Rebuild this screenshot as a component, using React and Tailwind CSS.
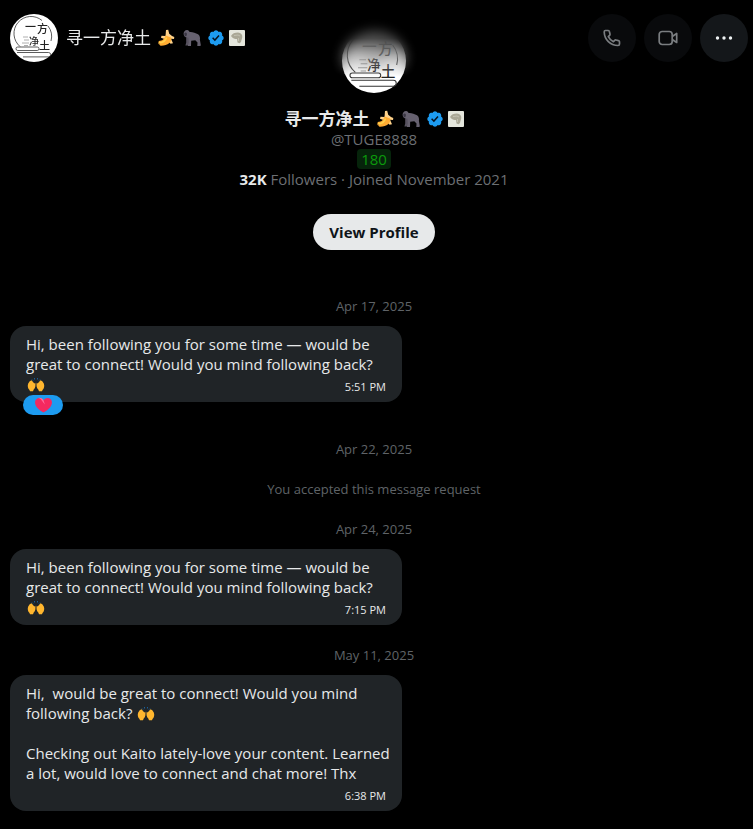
import React from 'react';

const messages = [
  { type: 'date', text: 'Apr 17, 2025' },
  {
    type: 'message',
    lines: ['Hi, been following you for some time — would be', 'great to connect! Would you mind following back?', '🙌'],
    time: '5:51 PM',
    reaction: true,
  },
  { type: 'date', text: 'Apr 22, 2025' },
  { type: 'date', text: 'You accepted this message request' },
  { type: 'date', text: 'Apr 24, 2025' },
  {
    type: 'message',
    lines: ['Hi, been following you for some time — would be', 'great to connect! Would you mind following back?', '🙌'],
    time: '7:15 PM',
  },
  { type: 'date', text: 'May 11, 2025' },
  {
    type: 'message',
    lines: [
      'Hi,  would be great to connect! Would you mind',
      'following back? 🙌',
      '',
      'Checking out Kaito lately-love your content. Learned',
      'a lot, would love to connect and chat more! Thx',
    ],
    time: '6:38 PM',
  },
];

const Avatar = ({ className }) => (
  <svg viewBox="0 0 48 48" className={className} role="img" aria-label="Avatar">
    <circle cx="24" cy="24" r="24" fill="#fff" />
    <g fill="none" stroke="#333" strokeWidth="0.8">
      <path d="M10 32.500A17 17 0 0 1 32 6.500M38 12A17 17 0 0 1 41 27" />
      <rect x="6" y="33" width="23" height="3.500" rx="1.700" />
      <path d="M7 38.500h31.500a2.200 2.200 0 0 1 0 4.400H13" />
      <path d="M13 23h5M14 26h5M12 29h7M14 31.500h4" stroke="#999" />
    </g>
    <g fill="#222" fontFamily="'Noto Sans CJK SC', sans-serif" fontWeight="500">
      <text x="15" y="17" fontSize="11">一</text>
      <text x="27" y="19" fontSize="11">方</text>
      <text x="19" y="31" fontSize="10">净</text>
      <text x="29" y="36" fontSize="11">土</text>
    </g>
  </svg>
);

const Banana = () => (
  <svg viewBox="0 0 18 18" className="size-[18px]" role="img" aria-label="banana">
    <path d="M9 1l2.200-.3 1 4L15 7l2.300 1-.3 2-3-.2 2 4.400-2.400.6L10 11 4 8.800l.5-2L8.500 7z" fill="#ffd28a" />
    <path d="M8.500 6.500l5.500 2c1.500 4.500-3.500 8.500-10.500 8.200L1.200 14.500l.6-2.500C5.500 11.800 7.500 10.300 8.500 6.500z" fill="#ffac33" />
    <path d="M9.500 8.500C8.500 12 6 13.800 1.800 13.800" stroke="#ffd24d" strokeWidth="1.500" fill="none" />
    <path d="M1.200 14.500l.4-1.700 1.500 3.800z" fill="#7a5420" />
  </svg>
);

const Gorilla = () => (
  <svg viewBox="0 0 18 18" className="size-[18px]" role="img" aria-label="gorilla">
    <path d="M.6 4.800C.5 2.600 2 .8 4.200.9c1.300.1 2 .9 2.300 2.100C9 2.600 12.500 3.800 15 5.200c1.800 1.200 2.300 3.300 1.900 5.500l.9 5.300-.4 1h-3.100l.2-3.500-2.200-2.300-4.100.6-.2 5.200H4.700l.4-2-.7-5.800L2.800 8.200C1.500 8 .7 6.400.6 4.800z" fill="#66616f" />
    <path d="M3.200 8.600l2.200.2.400 5-1.200 2.700H2.400l.8-3z" fill="#57525f" />
    <path d="M1.300 4.200C2 3.200 3.200 3.200 3.800 4.200l.1 1.800-1 1.400L1.500 6.600z" fill="#3a3643" />
  </svg>
);

const Verified = () => (
  <svg viewBox="0 0 22 22" className="size-[18px]" role="img" aria-label="Verified account">
    <path
      fill="#1d9bf0"
      d="M20.396 11c-.018-.646-.215-1.275-.57-1.816-.354-.54-.852-.972-1.438-1.246.223-.607.27-1.264.14-1.897-.131-.634-.437-1.218-.882-1.687-.47-.445-1.053-.75-1.687-.882-.633-.13-1.290-.083-1.897.14-.273-.587-.704-1.086-1.245-1.440S11.647 1.620 11 1.604c-.646.017-1.273.213-1.813.568s-.969.854-1.240 1.440c-.608-.223-1.267-.272-1.902-.140-.635.130-1.220.436-1.690.882-.445.470-.749 1.055-.878 1.688-.130.633-.080 1.290.144 1.896-.587.274-1.087.705-1.443 1.245-.356.540-.555 1.170-.574 1.817.020.647.218 1.276.574 1.817.356.540.856.972 1.443 1.245-.224.606-.274 1.263-.144 1.896.130.634.433 1.218.877 1.688.470.443 1.054.747 1.687.878.633.132 1.290.084 1.897-.136.274.586.705 1.084 1.246 1.439.540.354 1.170.551 1.816.569.647-.016 1.276-.213 1.817-.567s.972-.854 1.245-1.440c.604.239 1.266.296 1.903.164.636-.132 1.220-.447 1.680-.907.460-.460.776-1.044.908-1.681s.075-1.299-.165-1.903c.586-.274 1.084-.705 1.439-1.246.354-.540.551-1.170.569-1.816z"
    />
    <path fill="#06121f" d="M9.662 14.850l-3.429-3.428 1.293-1.302 2.072 2.072 4.400-4.794 1.347 1.246z" />
  </svg>
);

const Affiliate = () => (
  <svg viewBox="0 0 16 16" className="size-4" role="img" aria-label="Affiliate badge">
    <rect width="16" height="16" rx="1" fill="#e4e6dc" />
    <path d="M2 6c1-2.500 4-3.500 7-3.500 3 .2 4.500 2 4.300 4.500-.2 2-1 3-1.300 5l-1.500 1.200-2-.7-.5-3.500C6 9 3.500 8.500 2 6z" fill="#a9a795" />
    <path d="M5 5.500l4-.5 2 1M9.500 8v3" stroke="#c2c1b1" fill="none" />
  </svg>
);

const Hands = () => (
  <svg viewBox="0 0 20 16" className="inline-block h-4 w-5 align-[-3px]" role="img" aria-label="raised hands">
    <path d="M6 2.500l1 1M8.500 1v1.500M11.500 1v1.500M14 2.500l-1 1" stroke="#1d5f96" strokeWidth="1" />
    <path d="M5.500 3.300L8.300 6.500l1-.8c.5 2.600.2 5.100-1.600 6.900L7 14.200H4L3.500 13C1.800 11.500 1.300 8.800 2.200 6.500l1.500-2.300z" fill="#ffb62e" />
    <path d="M14.500 3.300L11.700 6.500l-1-.8c-.5 2.600-.2 5.100 1.600 6.900l.7 1.600h3l.5-1.200c1.700-1.500 2.200-4.200 1.300-6.500l-1.500-2.300z" fill="#ffb62e" />
  </svg>
);

const Heart = () => (
  <svg viewBox="0 0 20 17" className="h-4 w-[19px]" role="img" aria-label="heart">
    <path d="M10 16.500C5 13.500 1 10 1 5.500 1 1 7-.8 10 3.500 13-.8 19 1 19 5.500c0 4.500-4 8-9 11z" fill="#f4295f" />
    <path d="M10 3.500C8.500 1.200 6.300.6 4.500 1c3 .5 4.500 4 7 7z" fill="#ff6b9c" />
  </svg>
);

const PhoneIcon = () => (
  <svg viewBox="0 0 20 20" className="size-5" fill="none" stroke="#7a7d80" strokeWidth="1.700" strokeLinejoin="round">
    <path d="M3.400 2.500h2.800c.6 0 1.100.4 1.200 1l.6 2.600c.1.500 0 .9-.4 1.200L6.300 8.600c1.100 2.200 2.900 4 5.100 5.100l1.300-1.300c.3-.4.7-.5 1.200-.4l2.600.6c.6.100 1 .6 1 1.200v2.200c0 .9-.6 1.500-1.500 1.500C8.300 17.500 2.500 11.700 2.200 4c0-.9.400-1.500 1.200-1.500z" />
  </svg>
);

const VideoIcon = () => (
  <svg viewBox="0 0 20 20" className="size-5" fill="none" stroke="#7a7d80" strokeWidth="1.700" strokeLinejoin="round">
    <rect x="1.200" y="3.500" width="13" height="13" rx="3" />
    <path d="M14.200 8.500l4.500-3v9l-4.500-3" />
  </svg>
);

const MoreIcon = () => (
  <svg viewBox="0 0 20 20" className="size-5" fill="#eff3f4">
    <circle cx="3.500" cy="10" r="1.700" />
    <circle cx="10" cy="10" r="1.700" />
    <circle cx="16.500" cy="10" r="1.700" />
  </svg>
);

const Badges = () => (
  <span className="flex items-center">
    <Banana />
    <span className="ml-2 mr-1.5">
      <Gorilla />
    </span>
    <Verified />
    <span className="ml-1">
      <Affiliate />
    </span>
  </span>
);

const Header = () => (
  <header className="absolute inset-x-0 top-0 z-10 flex items-center justify-between pt-3.5 pb-3 pl-2.5">
    <div className="absolute inset-x-0 top-0 h-24 bg-linear-to-b from-black via-black/60 to-transparent backdrop-blur-[6px] [mask-image:linear-gradient(black_40%,transparent_80%)]" />
    <div className="relative flex items-center gap-2">
      <Avatar className="size-12" />
      <h1 className="flex items-center gap-1.5 text-[17px] leading-5 text-[#e7e9ea]">
        寻一方净土 <Badges />
      </h1>
    </div>
    <div className="relative flex gap-2">
      <button aria-label="Audio call" className="flex size-12 items-center justify-center rounded-full bg-[#090a0c]">
        <PhoneIcon />
      </button>
      <button aria-label="Video call" className="flex size-12 items-center justify-center rounded-full bg-[#090a0c]">
        <VideoIcon />
      </button>
      <button aria-label="More" className="flex size-12 items-center justify-center rounded-full bg-[#14171a]">
        <MoreIcon />
      </button>
    </div>
  </header>
);

const Profile = () => (
  <section className="flex flex-col items-center pt-[29px] pb-9 text-[15px] leading-5 text-[#6c6f73]">
    <Avatar className="mb-4 size-16" />
    <h2 className="flex items-center gap-1.5 text-[17px] leading-5 font-bold text-[#e7e9ea]">
      寻一方净土 <Badges />
    </h2>
    <p>@TUGE8888</p>
    <p className="rounded-sm bg-[#06240b] px-1 text-[#0b9a0b]">180</p>
    <p>
      <span className="font-bold text-[#e7e9ea]">32K</span> Followers · Joined November 2021
    </p>
    <button className="mt-[25px] h-9 rounded-full bg-[#e7e9ea] px-4 font-bold text-[#0f1419]">View Profile</button>
  </section>
);

const Message = ({ lines, time, reaction }) => (
  <div className={reaction ? 'mb-[27px]' : 'mb-2.5'}>
    <div className="relative w-full max-w-[392px] rounded-2xl bg-[#202427] py-2 pr-1.5 pl-4 text-[15px] leading-5 text-[#e7e9ea]">
      <div className="flow-root">
        {lines.map((line, i) => (
          <React.Fragment key={i}>
            <span className="whitespace-pre-wrap">{line.replace('🙌', '')}</span>
            {line.includes('🙌') && <Hands />}
            {i < lines.length - 1 && <br />}
          </React.Fragment>
        ))}
        <time className="float-right mr-2.5 ml-4 pt-1.5 text-[11px] leading-[14px]">{time}</time>
      </div>
      {reaction && (
        <button
          aria-label="Heart reaction"
          className="absolute -bottom-[13px] left-[13px] flex h-5 w-10 items-center justify-center rounded-full bg-[#1d9bf0]"
        >
          <Heart />
        </button>
      )}
    </div>
  </div>
);

const App = () => (
  <div className="min-h-screen bg-black pr-[5px] font-['Open_Sans','Noto_Sans_CJK_SC',sans-serif]">
    <div className="relative">
      <Header />
      <Profile />
      <main className="px-2.5 pb-2">
        {messages.map((item, i) =>
          item.type === 'date' ? (
            <p key={i} className="py-2.5 text-center text-[13px] leading-5 text-[#5f6367]">
              {item.text}
            </p>
          ) : (
            <Message key={i} {...item} />
          )
        )}
      </main>
    </div>
  </div>
);

export default App;
